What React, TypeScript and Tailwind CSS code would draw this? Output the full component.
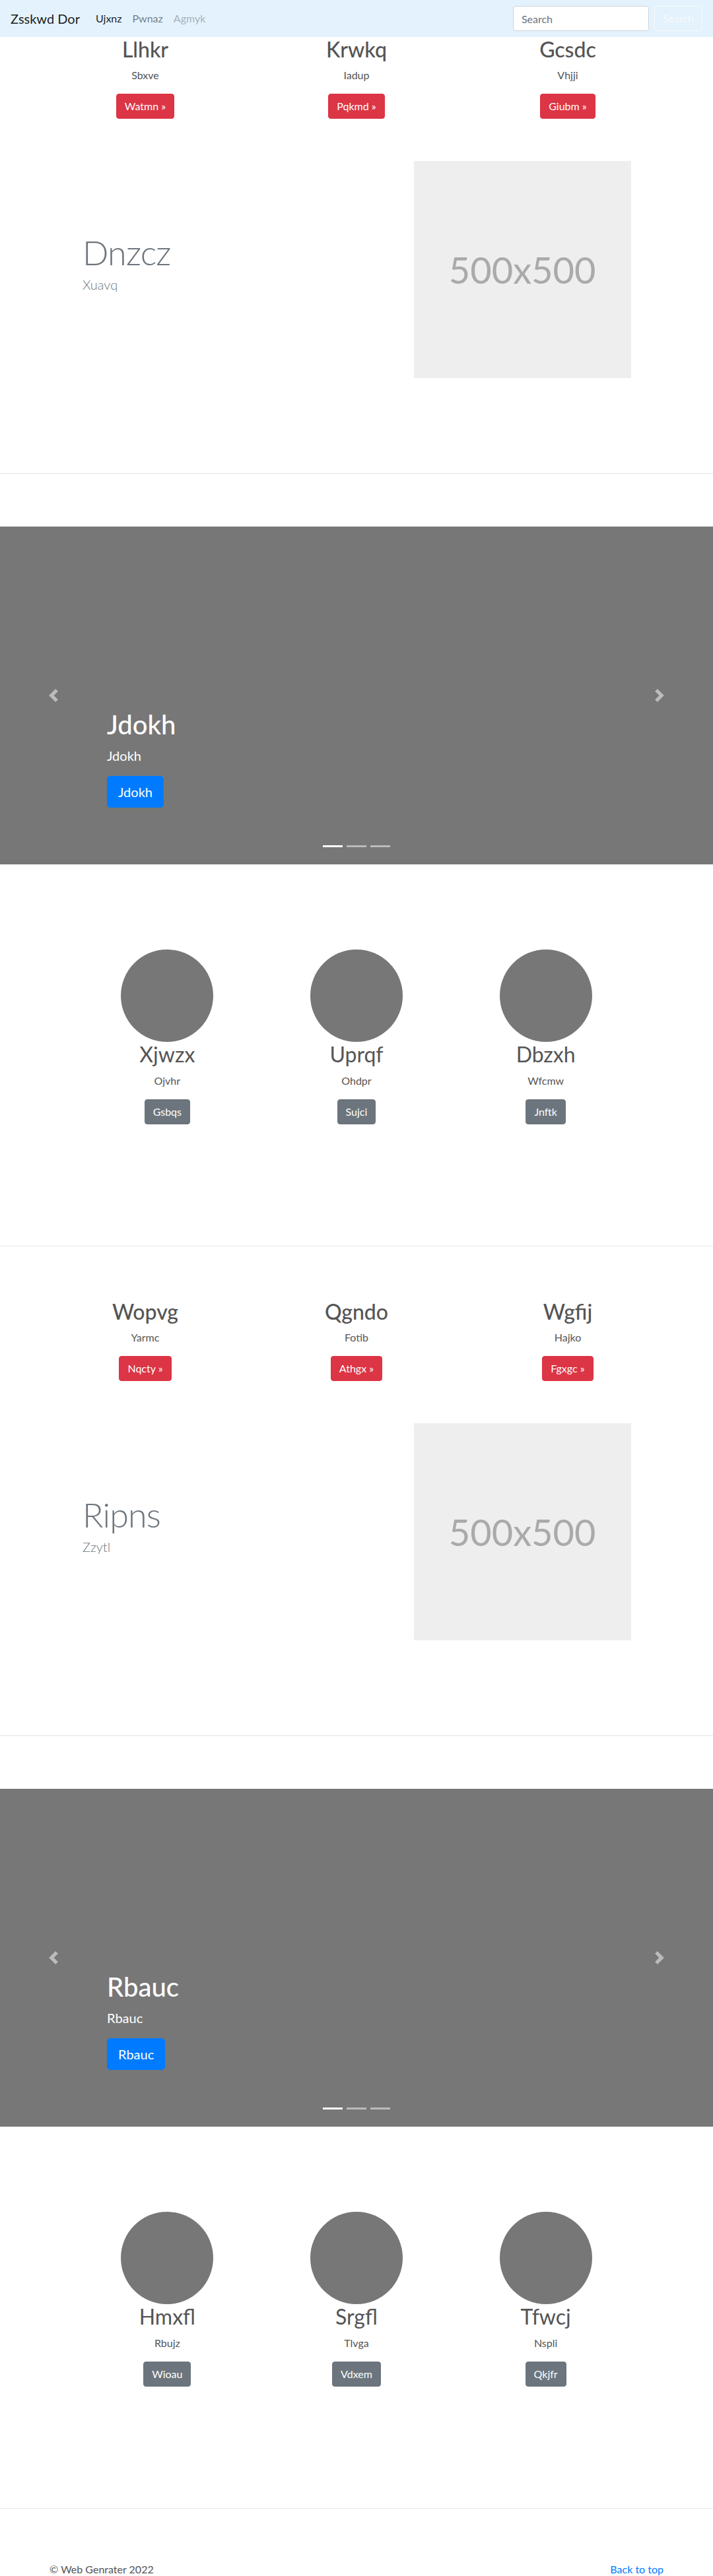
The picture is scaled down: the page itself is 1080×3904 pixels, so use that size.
import React from 'react';

type Item = { title: string; text: string; btn: string };
type Block = {
  cards: Item[];
  feature: { title: string; lead: string };
  slide: string;
  people: Item[];
};

const BLOCKS: Block[] = [
  {
    cards: [
      { title: 'Llhkr', text: 'Sbxve', btn: 'Watmn' },
      { title: 'Krwkq', text: 'Iadup', btn: 'Pqkmd' },
      { title: 'Gcsdc', text: 'Vhjji', btn: 'Giubm' },
    ],
    feature: { title: 'Dnzcz', lead: 'Xuavq' },
    slide: 'Jdokh',
    people: [
      { title: 'Xjwzx', text: 'Ojvhr', btn: 'Gsbqs' },
      { title: 'Uprqf', text: 'Ohdpr', btn: 'Sujci' },
      { title: 'Dbzxh', text: 'Wfcmw', btn: 'Jnftk' },
    ],
  },
  {
    cards: [
      { title: 'Wopvg', text: 'Yarmc', btn: 'Nqcty' },
      { title: 'Qgndo', text: 'Fotib', btn: 'Athgx' },
      { title: 'Wgfij', text: 'Hajko', btn: 'Fgxgc' },
    ],
    feature: { title: 'Ripns', lead: 'Zzytl' },
    slide: 'Rbauc',
    people: [
      { title: 'Hmxfl', text: 'Rbujz', btn: 'Wioau' },
      { title: 'Srgfl', text: 'Tlvga', btn: 'Vdxem' },
      { title: 'Tfwcj', text: 'Nspli', btn: 'Qkjfr' },
    ],
  },
];

const Navbar = () => (
  <nav className="h-14 bg-[#e3f2fd] flex items-center px-4">
    <a className="text-[20px] leading-[30px] mr-4 text-black/90">Zsskwd Dor</a>
    <ul className="flex text-base leading-6">
      <li><a className="px-2 text-black/90">Ujxnz</a></li>
      <li><a className="px-2 text-black/50">Pwnaz</a></li>
      <li><a className="px-2 text-black/30">Agmyk</a></li>
    </ul>
    <form className="ml-auto flex">
      <input
        placeholder="Search"
        className="w-[206px] h-[38px] px-3 mr-2 bg-white border border-[#ced4da] rounded text-base placeholder:text-[#6c757d] outline-none"
      />
      <button type="button" className="h-[38px] px-3 border border-[#f8f9fa] text-[#f8f9fa] rounded text-base">
        Search
      </button>
    </form>
  </nav>
);

const CardRow = ({ cards }: { cards: Item[] }) => (
  <div className="mx-auto w-[960px] flex">
    {cards.map((c) => (
      <div key={c.title} className="w-1/3 px-[15px] mb-6 text-center">
        <h2 className="text-[32px] leading-[1.2] font-medium mb-2 text-[#555]">{c.title}</h2>
        <p className="mb-4 leading-6">{c.text}</p>
        <p className="mb-4">
          <a className="inline-block bg-[#dc3545] border border-[#dc3545] text-white rounded px-3 py-[6px] leading-6">
            {c.btn} &raquo;
          </a>
        </p>
      </div>
    ))}
  </div>
);

const Featurette = ({ title, lead }: { title: string; lead: string }) => (
  <div className="mx-auto w-[860px] flex items-center pt-6 pb-16">
    <div className="w-7/12 px-[15px] text-[#6c757d]">
      <h2 className="text-[52px] leading-none font-light tracking-[-0.8px] mb-2">{title}</h2>
      <p className="text-[20px] leading-[1.5] font-light mb-4">{lead}</p>
    </div>
    <div className="w-5/12 px-[15px]">
      <div className="w-[329px] h-[329px] bg-[#eee] flex items-center justify-center text-[56px] text-[#aaa]">
        500x500
      </div>
    </div>
  </div>
);

const Divider = () => <div className="my-20 h-px bg-black/10" />;

const Carousel = ({ label }: { label: string }) => (
  <div className="relative h-[512px] bg-[#777] overflow-hidden">
    <div className="absolute left-[15%] right-[15%] bottom-[50px] py-5 text-white z-10">
      <h1 className="text-[40px] leading-[1.2] font-medium mb-2">{label}</h1>
      <p className="text-[20px] leading-[1.5] mb-4">{label}</p>
      <p className="mb-4">
        <a className="inline-block bg-[#007bff] border border-[#007bff] rounded-[5px] px-4 py-2 text-[20px] leading-[1.5]">
          {label}
        </a>
      </p>
    </div>
    <div className="absolute left-0 top-0 bottom-0 w-[15%] flex items-center justify-center opacity-50">
      <svg width="20" height="20" viewBox="0 0 8 8" fill="#fff">
        <path d="M5.25 0l-4 4 4 4 1.5-1.5L4.25 4l2.5-2.5L5.25 0z" />
      </svg>
    </div>
    <div className="absolute right-0 top-0 bottom-0 w-[15%] flex items-center justify-center opacity-50">
      <svg width="20" height="20" viewBox="0 0 8 8" fill="#fff">
        <path d="M2.75 0l-1.5 1.5L3.75 4l-2.5 2.5L2.75 8l4-4-4-4z" />
      </svg>
    </div>
    <div className="absolute left-0 right-0 bottom-0 mb-4 flex justify-center">
      <span className="w-[30px] h-[3px] mx-[3px] my-[10px] bg-white" />
      <span className="w-[30px] h-[3px] mx-[3px] my-[10px] bg-white/50" />
      <span className="w-[30px] h-[3px] mx-[3px] my-[10px] bg-white/50" />
    </div>
  </div>
);

const Marketing = ({ people }: { people: Item[] }) => (
  <div className="mx-auto w-[860px] flex pt-[129px] pb-16">
    {people.map((p) => (
      <div key={p.title} className="w-1/3 px-[15px] mb-6 flex flex-col items-center text-center">
        <div className="w-[140px] h-[140px] rounded-full bg-[#777]" />
        <h2 className="text-[32px] leading-[1.2] font-normal mb-2 text-[#555]">{p.title}</h2>
        <p className="mb-4 leading-6">{p.text}</p>
        <p className="mb-4">
          <a className="inline-block bg-[#6c757d] border border-[#6c757d] text-white rounded px-3 py-[6px] leading-6">
            {p.btn}
          </a>
        </p>
      </div>
    ))}
  </div>
);

export default function App() {
  return (
    <div className="bg-white text-[#555] text-base font-['Lato','Open_Sans',sans-serif]">
      <Navbar />
      {BLOCKS.map((b, i) => (
        <section key={i}>
          <CardRow cards={b.cards} />
          <Featurette title={b.feature.title} lead={b.feature.lead} />
          <Divider />
          <Carousel label={b.slide} />
          <Marketing people={b.people} />
          <Divider />
        </section>
      ))}
      <footer className="mx-auto w-[960px] px-[15px] flex justify-between leading-6">
        <p>&copy; Web Genrater 2022</p>
        <p><a className="text-[#007bff]">Back to top</a></p>
      </footer>
    </div>
  );
}
